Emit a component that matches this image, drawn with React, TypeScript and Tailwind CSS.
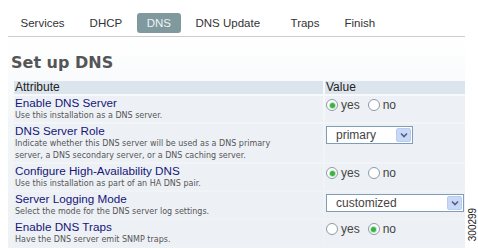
import React from "react";

const tabs = ["Services", "DHCP", "DNS", "DNS Update", "Traps", "Finish"];

type Row = {
  title: string;
  desc: string[];
  kind: "radio" | "select";
  value: string;
  selectWidth?: string;
};

const rows: Row[] = [
  { title: "Enable DNS Server", desc: ["Use this installation as a DNS server."], kind: "radio", value: "yes" },
  {
    title: "DNS Server Role",
    desc: [
      "Indicate whether this DNS server will be used as a DNS primary",
      "server, a DNS secondary server, or a DNS caching server.",
    ],
    kind: "select",
    value: "primary",
    selectWidth: "w-[87px]",
  },
  {
    title: "Configure High-Availability DNS",
    desc: ["Use this installation as part of an HA DNS pair."],
    kind: "radio",
    value: "yes",
  },
  {
    title: "Server Logging Mode",
    desc: ["Select the mode for the DNS server log settings."],
    kind: "select",
    value: "customized",
    selectWidth: "w-[138px]",
  },
  { title: "Enable DNS Traps", desc: ["Have the DNS server emit SNMP traps."], kind: "radio", value: "no" },
];

function Radio({ checked, label }: { checked: boolean; label: string }) {
  return (
    <span className="flex items-center gap-[3px]">
      <span className="flex h-[12px] w-[12px] items-center justify-center rounded-full border border-[#8a9aa8] bg-white">
        {checked && <span className="h-[5px] w-[5px] rounded-full bg-[#3cb043] shadow-[0_0_0_1px_#bfe6c0]" />}
      </span>
      <span>{label}</span>
    </span>
  );
}

function Select({ value, width }: { value: string; width?: string }) {
  return (
    <div className={`flex h-[18px] items-center justify-between border border-[#7f9db9] bg-white pl-[9px] pr-[1px] ${width}`}>
      <span className="leading-none">{value}</span>
      <span className="flex h-[14px] w-[15px] items-center justify-center rounded-[2px] border border-[#b9cbef] bg-[#c9d8f6]">
        <svg width="8" height="6" viewBox="0 0 8 6">
          <path d="M1 1.5 L4 4.5 L7 1.5" fill="none" stroke="#4d6185" strokeWidth="1.6" />
        </svg>
      </span>
    </div>
  );
}

export default function App() {
  return (
    <div className="relative h-[248px] w-[478px] overflow-hidden bg-white font-['DejaVu_Sans',sans-serif] text-[#333]">
      <div className="ml-[8px] w-[457px]">
        <div className="flex h-[37px] items-center border-b border-[#cccccc] pt-[12px] pb-[2px] font-['Liberation_Sans',sans-serif] text-[11.5px] leading-[14px]">
          {tabs.map((t) => (
            <span
              key={t}
              className={
                t === "DNS"
                  ? "mx-[2px] rounded-[3px] bg-[#7f999f] px-[10px] py-[3px] text-[#eef3f4]"
                  : t === "DNS Update"
                    ? "pl-[12.5px] pr-[18px] py-[3px] text-[#333]"
                    : "px-[12.5px] py-[3px] text-[#333]"
              }
            >
              {t}
            </span>
          ))}
        </div>

        <div className="h-[211px] bg-[linear-gradient(180deg,#ffffff_0%,#f3f6f8_40%,#eef2f5_100%)] pl-[3px]">
          <h1 className="pt-[16px] text-[16px] font-bold leading-[20px] text-[#555]">Set up DNS</h1>

          <div className="ml-[3px] mt-[8px] grid grid-cols-[309px_140px] gap-[2px] font-['Liberation_Sans',sans-serif]">
            <div className="h-[13px] bg-[#dce5ed] pl-[1px] text-[12px] leading-[13px] text-[#222]">Attribute</div>
            <div className="h-[13px] bg-[#dce5ed] pl-[1px] text-[12px] leading-[13px] text-[#222]">Value</div>

            {rows.map((r) => (
              <React.Fragment key={r.title}>
                <div className="bg-[#edf1f5] pl-[1px]">
                  <div className="text-[11.7px] leading-[14px] text-[#15157a]">{r.title}</div>
                  {r.desc.map((d) => (
                    <div key={d} className="font-['DejaVu_Sans',sans-serif] text-[8px] leading-[12px] text-[#555]">
                      {d}
                    </div>
                  ))}
                </div>
                <div className="bg-[#edf1f5] pl-[1px] pt-[2px] text-[12px] text-[#444]">
                  {r.kind === "radio" ? (
                    <div className="flex items-center gap-[8px] leading-[14px]">
                      <Radio checked={r.value === "yes"} label="yes" />
                      <Radio checked={r.value === "no"} label="no" />
                    </div>
                  ) : (
                    <Select value={r.value} width={r.selectWidth} />
                  )}
                </div>
              </React.Fragment>
            ))}
          </div>
        </div>
      </div>

      <div className="absolute left-[467px] top-[205px] h-[40px] w-[11px]">
        <span className="absolute left-[-15px] top-[14px] block w-[40px] -rotate-90 text-center font-['Liberation_Sans',sans-serif] text-[10px] leading-[11px] text-[#222]">
          300299
        </span>
      </div>
    </div>
  );
}
